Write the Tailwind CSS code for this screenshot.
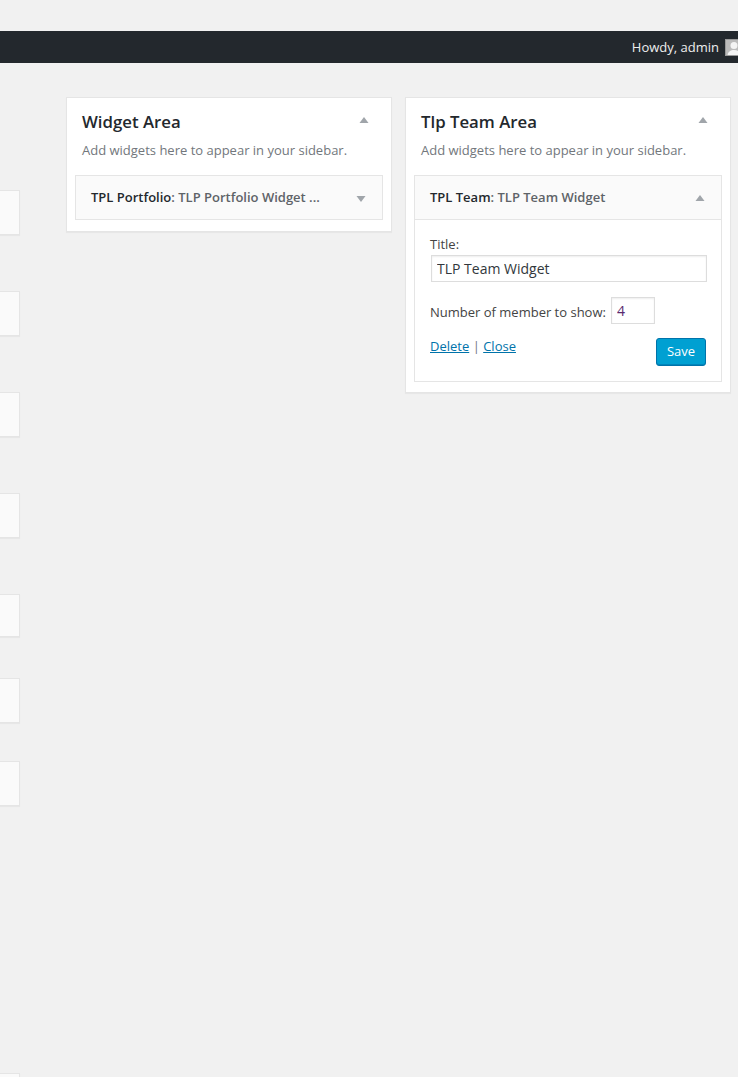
<!DOCTYPE html>
<html>
  <head>
    <meta charset="utf-8" />
    <title>Widgets</title>
    <script src="https://cdn.jsdelivr.net/npm/@tailwindcss/browser@4"></script>
  </head>
  <body class="bg-[#f1f1f1] font-['Open_Sans',sans-serif] text-[13px] text-[#444] h-[1077px] overflow-hidden">
    <div class="h-[31px]"></div>

    <!-- admin bar -->
    <div class="h-[32px] bg-[#23282d] flex justify-end items-center overflow-hidden text-[13px] text-[#eee]">
      <span class="mr-[6px] mt-[2px]">Howdy, admin</span>
      <div class="w-[13px] h-[17px] bg-[#bbb] overflow-hidden shrink-0 border-y border-l border-[#999]">
        <svg width="16" height="16" viewBox="0 0 16 16" fill="#f4f4f4">
          <circle cx="8" cy="5.500" r="3.500" />
          <path d="M1.500 16c0-4 3-6 6.500-6s6.500 2 6.500 6z" />
        </svg>
      </div>
    </div>

    <div class="flex items-start">
      <!-- available widgets, cut off at the left -->
      <div class="w-[20px] shrink-0 flex flex-col pt-[127px]">
        <div class="h-[45px] bg-[#fafafa] border border-l-0 border-[#e5e5e5] shadow-[0_1px_1px_rgba(0,0,0,0.04)]"></div>
        <div class="h-[45px] mt-[56px] bg-[#fafafa] border border-l-0 border-[#e5e5e5] shadow-[0_1px_1px_rgba(0,0,0,0.04)]"></div>
        <div class="h-[45px] mt-[56px] bg-[#fafafa] border border-l-0 border-[#e5e5e5] shadow-[0_1px_1px_rgba(0,0,0,0.04)]"></div>
        <div class="h-[45px] mt-[56px] bg-[#fafafa] border border-l-0 border-[#e5e5e5] shadow-[0_1px_1px_rgba(0,0,0,0.04)]"></div>
        <div class="h-[43px] mt-[56px] bg-[#fafafa] border border-l-0 border-[#e5e5e5] shadow-[0_1px_1px_rgba(0,0,0,0.04)]"></div>
        <div class="h-[45px] mt-[41px] bg-[#fafafa] border border-l-0 border-[#e5e5e5] shadow-[0_1px_1px_rgba(0,0,0,0.04)]"></div>
        <div class="h-[45px] mt-[38px] bg-[#fafafa] border border-l-0 border-[#e5e5e5] shadow-[0_1px_1px_rgba(0,0,0,0.04)]"></div>
        <div class="h-[45px] mt-[267px] bg-[#fafafa] border border-l-0 border-[#e5e5e5] shadow-[0_1px_1px_rgba(0,0,0,0.04)]"></div>
      </div>

      <div class="flex items-start gap-[13px] ml-[46px] mt-[34px]">
        <!-- Widget Area -->
        <div class="w-[326px] h-[135px] bg-white border border-[#e5e5e5] shadow-[0_1px_1px_rgba(0,0,0,0.04)] px-[8px]">
          <div class="flex justify-between pl-[7px] pr-[14px]">
            <h2 class="text-[16.8px] font-semibold text-[#23282d] leading-[24px] mt-[12px]">Widget Area</h2>
            <svg class="mt-[18px]" width="10" height="8" viewBox="0 0 10 8" fill="#a0a5aa"><path d="M5 1 9.500 7H.5z" /></svg>
          </div>
          <p class="pl-[7px] mt-[7px] leading-[18px] text-[#72777c]">Add widgets here to appear in your sidebar.</p>
          <div class="mt-[16px] h-[45px] bg-[#fafafa] border border-[#e5e5e5] flex items-center justify-between pl-[15px] pr-[16px]">
            <span class="font-semibold text-[#23282d]">TPL Portfolio<span class="text-[#5e6368]">: TLP Portfolio Widget ...</span></span>
            <svg class="mt-[3px]" width="10" height="8" viewBox="0 0 10 8" fill="#a0a5aa"><path d="M5 7 9.500 1H.5z" /></svg>
          </div>
        </div>

        <!-- Tlp Team Area -->
        <div class="w-[326px] h-[296px] bg-white border border-[#e5e5e5] shadow-[0_1px_1px_rgba(0,0,0,0.04)] px-[8px]">
          <div class="flex justify-between pl-[7px] pr-[14px]">
            <h2 class="text-[16.8px] font-semibold text-[#23282d] leading-[24px] mt-[12px]">Tlp Team Area</h2>
            <svg class="mt-[18px]" width="10" height="8" viewBox="0 0 10 8" fill="#a0a5aa"><path d="M5 1 9.500 7H.5z" /></svg>
          </div>
          <p class="pl-[7px] mt-[7px] leading-[18px] text-[#72777c]">Add widgets here to appear in your sidebar.</p>
          <div class="mt-[16px] border border-[#e5e5e5]">
            <div class="h-[44px] bg-[#fafafa] border-b border-[#e5e5e5] flex items-center justify-between pl-[15px] pr-[16px]">
              <span class="font-semibold text-[#23282d]">TPL Team<span class="text-[#5e6368]">: TLP Team Widget</span></span>
              <svg class="mt-[1px]" width="10" height="8" viewBox="0 0 10 8" fill="#a0a5aa"><path d="M5 1 9.500 7H.5z" /></svg>
            </div>
            <div class="h-[161px] px-[15px] pt-[15px]">
              <label class="block leading-[18px]">Title:</label>
              <input type="text" value="TLP Team Widget" class="block w-[276px] h-[27px] ml-px mt-[2px] border border-[#ddd] shadow-[inset_0_1px_2px_rgba(0,0,0,0.07)] px-[5px] text-[14px] text-[#32373c] outline-none" />
              <div class="flex items-center mt-[15px]">
                <span class="mt-[5px]">Number of member to show:</span>
                <input type="text" value="4" class="w-[44px] h-[27px] ml-[5px] border border-[#ddd] shadow-[inset_0_1px_2px_rgba(0,0,0,0.07)] px-[5px] text-[14px] text-[#5b2a6e] outline-none" />
              </div>
              <div class="flex justify-between items-start mt-[14px]">
                <div class="-mt-px leading-[18px]">
                  <a class="text-[#0073aa] underline">Delete</a>
                  <span class="text-[#72777c]"> | </span>
                  <a class="text-[#0073aa] underline">Close</a>
                </div>
                <button class="w-[50px] h-[28px] bg-[#00a0d2] border border-[#0073aa] rounded-[3px] text-white text-[13px] shadow-[inset_0_-1px_0_rgba(0,115,170,0.6)]">Save</button>
              </div>
            </div>
          </div>
        </div>
      </div>
    </div>
  </body>
</html>
